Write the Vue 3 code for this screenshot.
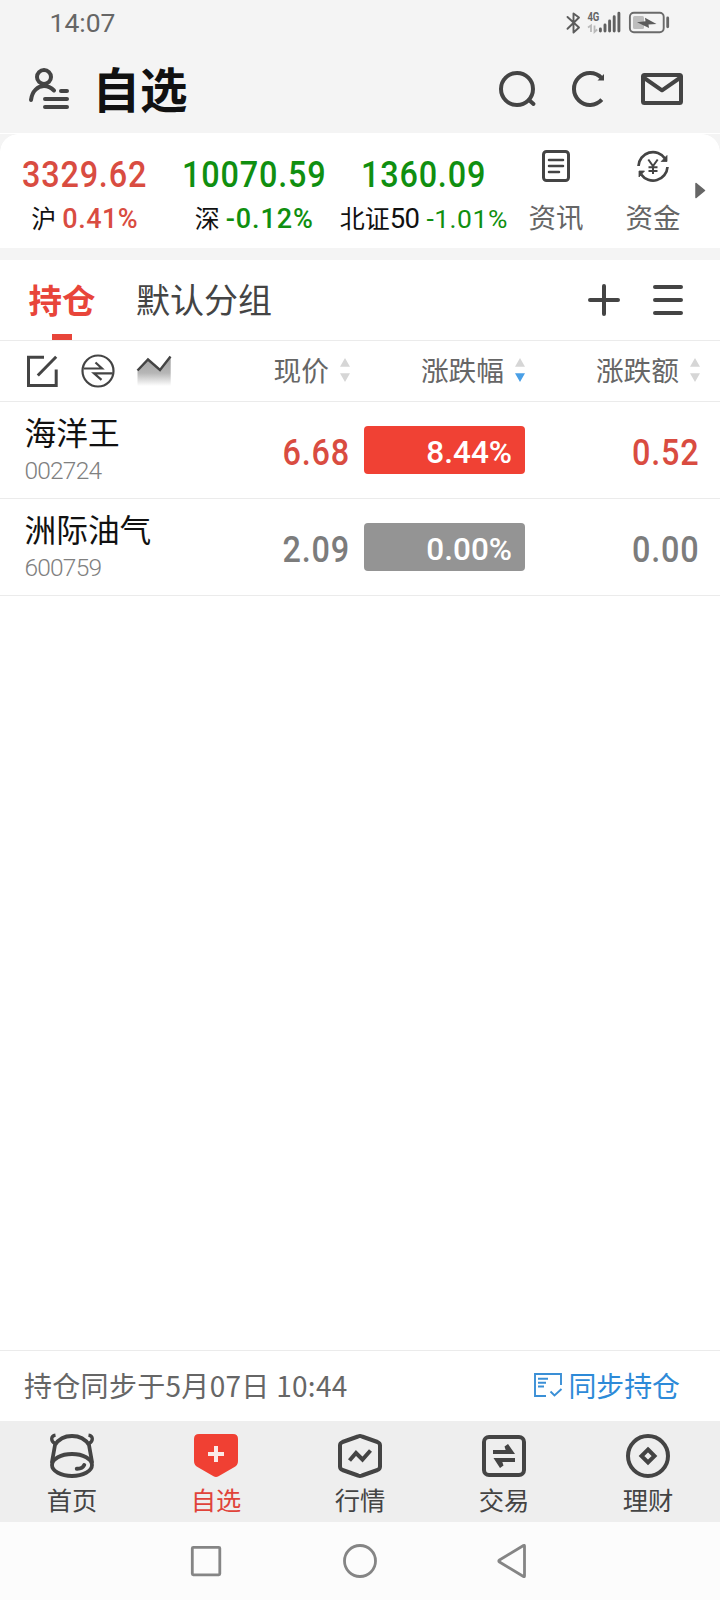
<script setup>
const indices = [
  { value: '3329.62', name: '沪', num: '', change: '0.41%', tone: 'up' },
  { value: '10070.59', name: '深', num: '', change: '-0.12%', tone: 'down' },
  { value: '1360.09', name: '北证', num: '50', change: '-1.01%', tone: 'down thin' },
]
const stocks = [
  { name: '海洋王', code: '002724', price: '6.68', pct: '8.44%', diff: '0.52', tone: 'rise' },
  { name: '洲际油气', code: '600759', price: '2.09', pct: '0.00%', diff: '0.00', tone: 'flat' },
]
</script>

<template>
  <div class="screen">
    <div class="status">
      <span class="clock">14:07</span>
      <svg class="sys" width="110" height="30" viewBox="562 8 110 30">
        <path d="M567.5 17 L579 27.5 L573.5 32.5 V13.5 L579 17.5 L567.5 28.8" fill="none" stroke="#5c5c5c" stroke-width="1.9" stroke-linejoin="round" stroke-linecap="round" />
        <text x="587.4" y="21.2" class="net" textLength="12" lengthAdjust="spacingAndGlyphs">4G</text>
        <path d="M588 27.5 L591 25.5 V32 M594.5 25.5 V32 L597.2 29.5" fill="none" stroke="#b9b9b9" stroke-width="1.8" />
        <path d="M600.4 29V31M605 25V31M609.6 21V31M614.2 16.8V31M618.9 13.2V31" stroke="#606060" stroke-width="2.9" stroke-linecap="round" />
        <rect x="629.9" y="12.8" width="33.8" height="19.4" rx="4" fill="none" stroke="#6a6a6a" stroke-width="1.9" />
        <rect x="633" y="16" width="11" height="13" rx="1.5" fill="#bdbdbd" />
        <path d="M637 22.2 L645.5 21.2 L645 17.8 L656.5 24 L648.5 24.6 L649 28Z" fill="#5c5c5c" />
        <path d="M667.7 18V26.8" stroke="#666" stroke-width="2.8" stroke-linecap="round" />
      </svg>
    </div>

    <header class="head">
      <svg width="44" height="46" viewBox="27 66 44 46" class="ink">
        <circle cx="44" cy="77" r="7" />
        <path d="M31 100 C32 91 38 86 44 86 C48.500 86 51.500 88 54 90.500 M61 91H67M45 99H67M45 107H67" />
      </svg>
      <h1>自选</h1>
      <div class="head-actions">
        <svg width="186" height="40" viewBox="498 69 186 40" class="ink">
          <circle cx="517" cy="89" r="16" />
          <path d="M529 100 L533.500 104" />
          <path d="M601.500 77.800 A16 16 0 1 0 601.800 99.700" stroke-linecap="butt" />
          <path d="M604 74V80.600H597.500Z" fill="#444" stroke="none" />
          <rect x="643" y="75" width="38" height="28" rx="1.500" />
          <path d="M643.500 77.500 L662 90.300 L680.500 77.500" />
        </svg>
      </div>
    </header>

    <section class="market">
      <div v-for="i in indices" :key="i.name" class="index" :class="i.tone">
        <div class="big">{{ i.value }}</div>
        <div class="sub"><span class="nm">{{ i.name }}</span><span v-if="i.num" class="fifty">{{ i.num }}</span><span class="chg">{{ i.change }}</span></div>
      </div>
      <div class="quick">
        <svg width="36" height="36" viewBox="538 148 36 36" fill="none" stroke="#444">
          <rect x="543.500" y="151.500" width="25" height="29" rx="3" stroke-width="3" />
          <path d="M549 160H563M549 166H563M549 172H559" stroke-width="2.500" stroke-linecap="round" />
        </svg>
        <span>资讯</span>
      </div>
      <div class="quick">
        <svg width="36" height="36" viewBox="635 148 36 36" fill="none" stroke="#444" stroke-width="2.700">
          <path d="M638.500 166 A14.500 14.500 0 0 1 665 158.500" />
          <path d="M667.500 167 A14.500 14.500 0 0 1 641.200 174.500" />
          <path d="M667 155.500V161.500H661.200ZM639 177V171H644.500Z" fill="#444" stroke-width=".8" />
          <path d="M648.300 159.500 L653 166 L657.700 159.500 M653 166V174M648.500 167.300H657.500M648.500 171H657.500" stroke-width="2" />
        </svg>
        <span>资金</span>
      </div>
      <svg class="more" width="12" height="18" viewBox="694 181 12 18"><path d="M696 183.500 L704.500 190.500 L696 197.500Z" fill="#666" stroke="#666" stroke-width="1.500" stroke-linejoin="round" /></svg>
    </section>

    <nav class="groups">
      <div class="group on">持仓</div>
      <div class="group">默认分组</div>
      <svg width="98" height="36" viewBox="587 282 98 36" class="ink">
        <path d="M590 300H618M604 286V314M655 287H681M655 300H681M655 313H681" />
      </svg>
    </nav>

    <div class="columns">
      <svg class="tools" width="148" height="36" viewBox="25 353 148 36" fill="none" stroke="#444">
        <path d="M44 357.300H28.500V385.500H56.200V369.500" stroke-width="3" />
        <path d="M56.200 356.800L37.800 375.500" stroke-width="3" />
        <circle cx="98" cy="371" r="15.500" stroke-width="2.200" />
        <path d="M84 368.500H102L95.500 362.500M112.500 373.300H94L101.500 379.800" stroke-width="2.200" />
        <defs><linearGradient id="fade" x1="0" y1="0" x2="0" y2="1"><stop offset="0" stop-color="#a0a0a0" /><stop offset=".55" stop-color="#b6b6b6" /><stop offset="1" stop-color="#fff" /></linearGradient></defs>
        <path d="M137.500 370.500L148 359.500L160 370L170.700 357V386H137.500Z" fill="url(#fade)" stroke="none" />
        <path d="M137.500 370.500L148 359.500L160 370L170.500 356.500" stroke-width="2.400" />
      </svg>
      <div class="col c1">现价<i class="sort"></i></div>
      <div class="col c2">涨跌幅<i class="sort active"></i></div>
      <div class="col c3">涨跌额<i class="sort"></i></div>
    </div>

    <div v-for="s in stocks" :key="s.code" class="stock" :class="s.tone">
      <div class="who"><div class="name">{{ s.name }}</div><div class="code">{{ s.code }}</div></div>
      <div class="price">{{ s.price }}</div>
      <div class="badge">{{ s.pct }}</div>
      <div class="diff">{{ s.diff }}</div>
    </div>

    <div class="blank"></div>

    <div class="sync">
      <span class="when">持仓同步于5月07日 10:44</span>
      <span class="link">
        <svg width="32" height="30" viewBox="532 1370 32 30" fill="none" stroke="#3a8fd6" stroke-width="1.900">
          <path d="M546 1396H535V1374H561V1385M538 1378.700H548M538 1382.700H546M538 1386.500H544" />
          <path d="M550.500 1391.500L554.500 1395.500L561.500 1389" />
        </svg><span>同步持仓</span></span>
    </div>

    <nav class="tabs">
      <div class="tab">
        <svg width="48" height="48" viewBox="48 1432 48 48" class="ink">
          <path d="M52 1462 L55 1445 C59 1438.500 65 1436 72 1436 C79 1436 85 1438.500 89 1445 L92 1462" stroke-width="3.800" />
          <ellipse cx="72" cy="1465" rx="20" ry="11" stroke-width="3.800" />
          <path d="M55.500 1435.200C50.500 1436 50.500 1441 55 1443.500M88.500 1435.200C93.500 1436 93.500 1441 89 1443.500" stroke-width="3.300" stroke-linecap="butt" />
          <path d="M76.800 1468.700C80 1468.800 83 1467.500 84.200 1465" />
        </svg><span>首页</span>
      </div>
      <div class="tab sel">
        <svg width="48" height="48" viewBox="192 1432 48 48">
          <path d="M199 1434H233Q238 1434 238 1439V1461Q238 1465 234.500 1467L218.500 1476.300Q216 1477.700 213.500 1476.300L197.500 1467Q194 1465 194 1461V1439Q194 1434 199 1434Z" fill="#f04033" />
          <path d="M208 1454H224M216 1446V1462" stroke="#fbe9e7" stroke-width="4" />
        </svg><span>自选</span>
      </div>
      <div class="tab">
        <svg width="48" height="48" viewBox="336 1432 48 48" class="ink">
          <path d="M358 1436.500Q360 1435.700 362 1436.500L377.500 1442Q380 1443 380 1445.500V1466.500Q380 1469 377.500 1470L362 1475.500Q360 1476.300 358 1475.500L342.500 1470Q340 1469 340 1466.500V1445.500Q340 1443 342.500 1442Z" />
          <path d="M349.500 1460.500L356 1453L362.500 1459.500L370.500 1450.500" stroke-linecap="butt" stroke-linejoin="miter" />
        </svg><span>行情</span>
      </div>
      <div class="tab">
        <svg width="48" height="48" viewBox="480 1432 48 48" class="ink">
          <rect x="484" y="1437" width="40" height="38" rx="5" />
          <path d="M493 1452H511M515 1460H497" stroke-linecap="butt" stroke-width="3.800" />
          <path d="M508 1444L515 1454H507L504.500 1446.500ZM500 1468L493.500 1458H501L503.500 1465.500Z" fill="#444" stroke="none" />
        </svg><span>交易</span>
      </div>
      <div class="tab">
        <svg width="48" height="48" viewBox="624 1432 48 48" class="ink">
          <circle cx="648" cy="1456" r="20" />
          <path d="M648 1449.500L654.500 1456L648 1462.500L641.500 1456Z" stroke-linejoin="miter" />
        </svg><span>理财</span>
      </div>
    </nav>

    <div class="system-nav">
      <svg width="340" height="38" viewBox="190 1542 340 38" fill="none" stroke="#858585" stroke-width="2.800" stroke-linejoin="round">
        <rect x="192.300" y="1547.300" width="27.500" height="27.500" rx="1" />
        <circle cx="360" cy="1561" r="15.500" />
        <path d="M524.500 1546V1576Q524.500 1577 523.500 1576.500L499.500 1562Q498 1561 499.500 1560L523.500 1545.500Q524.500 1545 524.500 1546Z" />
      </svg>
    </div>
  </div>
</template>

<style>
body { background: #fff; }
</style>

<style scoped>
* { box-sizing: border-box; }
.screen { width: 720px; height: 1600px; display: flex; flex-direction: column; background: #fff; overflow: hidden; white-space: nowrap; font-family: "Noto Sans CJK SC", sans-serif; color: #444; }
.screen > * { flex: none; }
svg { display: block; flex: none; }
.ink { fill: none; stroke: #444; stroke-width: 4; stroke-linecap: round; stroke-linejoin: round; }
.status { height: 44px; background: #f4f4f4; display: flex; justify-content: space-between; padding: 8px 48px 0 49.5px; }
.clock { font: 400 26.5px/30px Roboto, sans-serif; color: #666; }
.net { font: 700 12.5px Roboto, sans-serif; fill: #666; }
.head { height: 89px; background: #f4f4f4; display: flex; align-items: center; padding: 1px 36px 0 27px; }
h1 { margin: 0 0 2px 21.5px; font-size: 47.5px; line-height: 60px; font-weight: 700; color: #111; }
.head-actions { margin-left: auto; }
.market { height: 127px; border-top: 1px solid #fff; border-bottom: 12px solid #f4f4f4; display: grid; grid-template-columns: 169.5px 169.5px 169.5px 95px 99px 12px; background: radial-gradient(circle at 18px 18px, #fff 17.5px, #f4f4f4 18px) left top / 18px 18px no-repeat, radial-gradient(circle at 0 18px, #fff 17.5px, #f4f4f4 18px) right top / 18px 18px no-repeat, #fff; }
.index { display: flex; flex-direction: column; align-items: center; color: #108f10; }
.index.up { color: #d94c41; }
.big { margin-top: 20px; font: 500 36px/43px Roboto, sans-serif; letter-spacing: .9px; transform: scaleX(.9); }
.sub { height: 40px; display: flex; justify-content: center; align-items: baseline; line-height: 40px; }
.nm { font-size: 25px; color: #111; }
.fifty { font: 400 27.5px/40px Roboto, sans-serif; color: #111; letter-spacing: -.6px; }
.chg { margin-left: 6px; font: 500 27px/40px Roboto, sans-serif; letter-spacing: .5px; }
.down .chg { letter-spacing: .9px; }
.thin .chg { margin-left: 7px; font-weight: 400; font-size: 26.500px; letter-spacing: .5px; }
.quick { display: flex; flex-direction: column; align-items: center; padding-top: 14px; color: #666; font-size: 27.5px; }
.quick span { line-height: 40px; margin-top: 12px; }
.more { margin: 47px 0 0 -8.500px; }
.groups { height: 81px; border-bottom: 1px solid #ebebeb; display: flex; align-items: center; padding: 0 35px 0 28.500px; font-size: 34px; }
.group { height: 80px; line-height: 78px; margin-right: 40.500px; position: relative; }
.group.on { font-size: 33.500px; font-weight: 700; color: #e8453a; }
.group.on::after { content: ""; position: absolute; left: 23.500px; bottom: 0; width: 20px; height: 6px; background: #e8453a; }
.groups svg { margin-left: auto; }
.columns { height: 61px; border-bottom: 1px solid #ebebeb; display: grid; grid-template-columns: 148px 177px 175px 175px; padding-left: 25px; align-items: center; font-size: 27.700px; color: #666; }
.col { display: flex; justify-content: flex-end; align-items: center; line-height: 54px; margin-bottom: 4px; }
.sort { width: 10px; height: 24px; margin: 2px 0 0 11px; background: #d6d6d6; clip-path: polygon(50% 0, 100% 36%, 0 36%, 0 64%, 100% 64%, 50% 100%, 0 64%, 0 36%); }
.sort.active { background: linear-gradient(#d6d6d6 50%, #4a9fe6 50%); }
.stock { height: 97px; border-bottom: 1px solid #ebebeb; display: grid; grid-template-columns: 175px 150px 175.500px 174.500px; padding-left: 24.500px; font-family: Roboto, sans-serif; }
.name { margin-top: 10px; height: 42px; line-height: 38px; font-family: "Noto Sans CJK SC", sans-serif; font-size: 31.700px; color: #111; }
.code { font-size: 24.500px; line-height: 33px; font-weight: 300; color: #808080; letter-spacing: -.8px; }
.price, .diff { font-size: 36px; line-height: 103px; font-weight: 500; letter-spacing: .9px; text-align: right; transform: scaleX(.9); transform-origin: right center; }
.rise { color: #d94c41; }
.flat { color: #7c7c7c; }
.badge { margin: 24px 0 0 14.500px; width: 161px; height: 48px; border-radius: 4px; color: #fff; background: #f04134; padding-right: 13px; text-align: right; font-size: 31.500px; line-height: 53px; font-weight: 500; }
.flat .badge { background: #949494; }
.screen > .blank { flex: 1; }
.sync { height: 71px; border-top: 1px solid #ebebeb; display: flex; justify-content: space-between; padding: 0 40px 0 24px; font-size: 28px; line-height: 69px; color: #666; }
.when { letter-spacing: .3px; }
.link { height: 67px; display: flex; align-items: center; color: #2d8ad8; gap: 4px; font-size: 27.900px; }
.link span { padding-top: 2px; }
.tabs { height: 101px; background: #eee; display: grid; grid-template-columns: repeat(5, 144px); }
.tab { display: flex; flex-direction: column; align-items: center; padding-top: 11px; font-size: 25.300px; }
.tab span { line-height: 38px; }
.tab.sel { color: #e0433a; }
.system-nav { height: 78px; background: #fcfcfc; display: flex; justify-content: center; align-items: center; }
</style>
